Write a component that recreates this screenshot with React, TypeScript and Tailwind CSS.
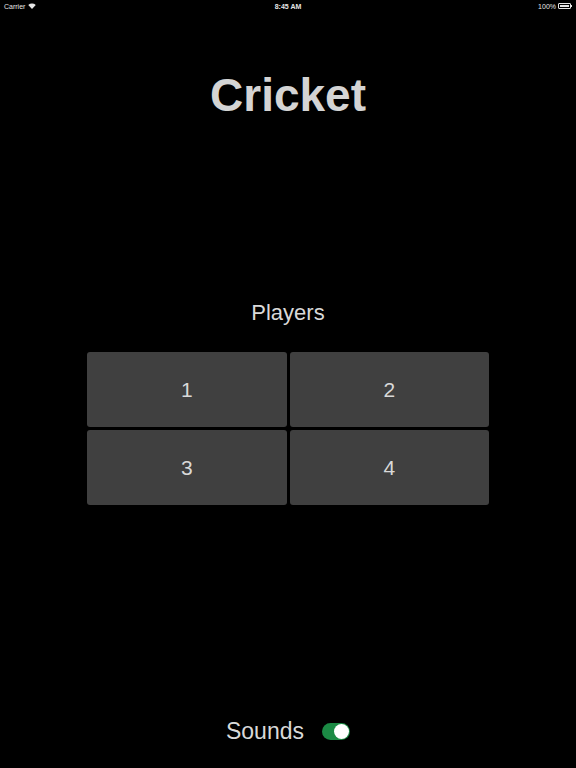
import React from "react";

export default function App() {
  return (
    <div
      className="w-[576px] h-[768px] bg-black flex flex-col items-center text-[#d9d9d9]"
      style={{ fontFamily: '"Liberation Sans", Arial, sans-serif' }}
    >
      {/* status bar */}
      <div className="w-full h-[12px] flex items-center justify-between px-[4px] text-[7px] leading-none text-[#e6e6e6]">
        <div className="flex items-center gap-[3px] w-[100px]">
          <span>Carrier</span>
          <svg width="8" height="6" viewBox="0 0 16 12">
            <path d="M8 12 L0.5 4 A11 11 0 0 1 15.5 4 Z" fill="#e6e6e6" />
          </svg>
        </div>
        <span className="font-bold">8:45 AM</span>
        <div className="flex items-center justify-end gap-[2px] w-[100px]">
          <span>100%</span>
          <div className="flex items-center">
            <div className="w-[13px] h-[6px] border border-[#e6e6e6] rounded-[1px] p-[1px]">
              <div className="w-full h-full bg-[#e6e6e6]" />
            </div>
            <div className="w-[1px] h-[2px] bg-[#e6e6e6]" />
          </div>
        </div>
      </div>

      <h1 className="mt-[58px] text-[46px] font-bold leading-[50px] text-[#d4d4d4]">Cricket</h1>

      <div className="mt-[181px] text-[22px] leading-[24px] text-[#d9d9d9]">Players</div>

      <div className="mt-[27px] grid grid-cols-2 gap-[3px] w-[402px]">
        {["1", "2", "3", "4"].map((n) => (
          <button
            key={n}
            className="h-[75px] bg-[#404040] rounded-[3px] flex items-center justify-center text-[21px] text-[#d9d9d9]"
          >
            {n}
          </button>
        ))}
      </div>

      <div className="mt-auto mb-[24px] flex items-center gap-[18px]">
        <span className="text-[23px] leading-[26px] text-[#d9d9d9]">Sounds</span>
        <div className="w-[28px] h-[17px] rounded-full bg-[#1b8a44] flex items-center justify-end p-[1px]">
          <div className="w-[15px] h-[15px] rounded-full bg-white" />
        </div>
      </div>
    </div>
  );
}
